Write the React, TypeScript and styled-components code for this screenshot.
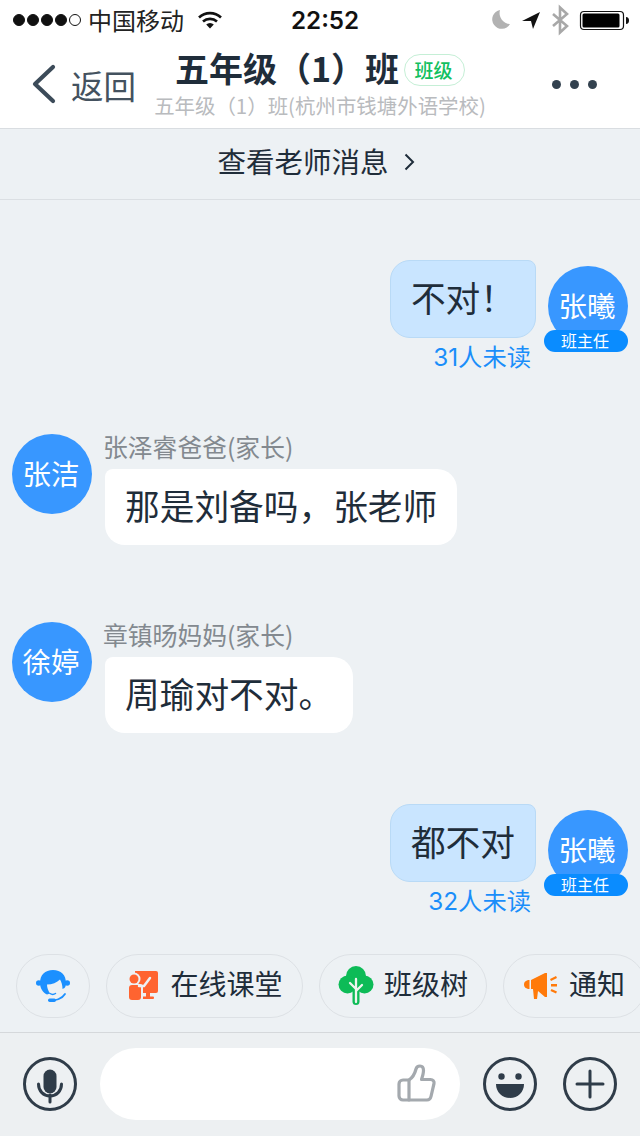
import React from 'react'
import styled, { createGlobalStyle } from 'styled-components'

const GlobalStyle = createGlobalStyle`
    html, body {
        margin: 0;
        padding: 0;
        background: #edf1f4;
    }
    * {
        box-sizing: border-box;
    }
`
const Page = styled.div`
    width: 640px;
    height: 1136px;
    display: flex;
    flex-direction: column;
    overflow: hidden;
    background: #edf1f4;
    color: #1f2d3a;
    font-family: "Noto Sans CJK SC", "Liberation Sans", sans-serif;
`
const StatusBar = styled.div`
    height: 40px;
    flex: none;
    display: flex;
    align-items: center;
    justify-content: space-between;
    padding: 0 11px 0 13px;
    background: #fff;
    position: relative;
    color: #111;
`
const StatusGroup = styled.div`
    display: flex;
    align-items: center;
`
const Dots = styled.div`
    display: flex;
    gap: 2px;
    margin-right: 7px;
`
const Dot = styled.span<{ $hollow?: boolean }>`
    width: 12px;
    height: 12px;
    border-radius: 50%;
    background: ${p => (p.$hollow ? '#fff' : '#111')};
    border: 1.5px solid #111;
`
const Carrier = styled.span`
    font-size: 24px;
    line-height: 40px;
    margin-right: 14px;
    color: #222;
`
const Clock = styled.span`
    position: absolute;
    left: 291px;
    top: 0;
    font: 600 24.2px/41px Inter, "Liberation Sans", sans-serif;
    color: #111;
`
const Nav = styled.div`
    height: 89px;
    flex: none;
    display: grid;
    grid-template-columns: 1fr auto 1fr;
    align-items: center;
    background: #fff;
    border-bottom: 1px solid #d9dde1;
`
const Back = styled.div`
    display: flex;
    align-items: center;
    padding-left: 32px;
    font-size: 32.5px;
    color: #44525f;
    svg {
        margin-right: 15px;
    }
`
const Center = styled.div`
    display: flex;
    flex-direction: column;
    align-items: center;
`
const TitleRow = styled.div`
    display: flex;
    align-items: center;
    height: 36px;
`
const Title = styled.span`
    font-size: 34px;
    font-weight: 700;
    line-height: 36px;
    color: #1f2d3a;
`
const Tag = styled.span`
    width: 61px;
    height: 32px;
    margin: 4px 0 0 5px;
    padding-right: 2px;
    border: 1px solid #c5efd6;
    border-radius: 16px;
    display: flex;
    align-items: center;
    justify-content: center;
    font-size: 19px;
    font-weight: 500;
    color: #12c060;
`
const SubTitle = styled.div`
    font-size: 20.44px;
    line-height: 28px;
    margin-top: 5px;
    color: #b9bbbe;
    white-space: nowrap;
`
const More = styled.div`
    display: flex;
    justify-content: flex-end;
    gap: 9px;
    padding-right: 43px;
`
const MoreDot = styled.span`
    width: 9px;
    height: 9px;
    border-radius: 50%;
    background: #33424f;
`
const NoticeBar = styled.div`
    height: 71px;
    flex: none;
    display: flex;
    align-items: center;
    justify-content: center;
    padding: 0 8px 8px 0;
    font-size: 28.5px;
    color: #1f2d3a;
    border-bottom: 1px solid #dbdfe3;
    svg {
        margin-left: 15px;
        margin-top: 4px;
    }
`
const Chat = styled.div`
    flex: 1;
    display: flex;
    flex-direction: column;
    min-height: 0;
`
const SelfRow = styled.div<{ $top: number }>`
    margin-top: ${p => p.$top}px;
    display: flex;
    justify-content: flex-end;
    padding-right: 12px;
`
const SelfBody = styled.div`
    display: flex;
    flex-direction: column;
    align-items: flex-end;
    margin-right: 12px;
`
const SelfBubble = styled.div`
    height: 78px;
    padding: 0 20px 4px;
    display: flex;
    align-items: center;
    font-size: 34.7px;
    background: #c9e5ff;
    border: 1px solid #b9daf6;
    border-radius: 20px 8px 20px 20px;
`
const Unread = styled.div`
    font-family: Inter, "Noto Sans CJK SC", sans-serif;
    font-size: 24.3px;
    line-height: 36px;
    padding: 1px 5px 1px 0;
    color: #1a8efa;
`
const Avatar = styled.div`
    position: relative;
    width: 80px;
    height: 80px;
    flex: none;
    padding: 0 2px 4px 0;
    border-radius: 50%;
    background: #3897ff;
    color: #fff;
    font-size: 28.4px;
    display: flex;
    align-items: center;
    justify-content: center;
`
const SelfAvatar = styled(Avatar)`
    margin-top: 6px;
`
const RoleBadge = styled.span`
    position: absolute;
    left: -4px;
    right: 0;
    top: 64px;
    height: 22px;
    border-radius: 11px;
    background: #0a8cff;
    font-size: 16px;
    line-height: 21px;
    padding-right: 2px;
    text-align: center;
`
const OtherRow = styled.div<{ $top: number }>`
    margin-top: ${p => p.$top}px;
    display: flex;
    padding-left: 12px;
`
const OtherBody = styled.div`
    margin-left: 12px;
    display: flex;
    flex-direction: column;
    align-items: flex-start;
`
const Sender = styled.div`
    height: 35px;
    margin-left: -1px;
    font-size: 24.8px;
    line-height: 25px;
    color: #83898f;
`
const OtherBubble = styled.div`
    height: 76px;
    margin-left: 1px;
    padding: 0 20px 4px;
    display: flex;
    align-items: center;
    font-size: 34.7px;
    background: #fff;
    border-radius: 8px 20px 20px 20px;
`
const QuickBar = styled.div`
    height: 79px;
    flex: none;
    display: flex;
    gap: 16px;
    padding-left: 16px;
    overflow: hidden;
    border-bottom: 1px solid #d5d8db;
`
const Pill = styled.div<{ $gap?: number; $pad?: number }>`
    height: 64px;
    flex: none;
    display: flex;
    align-items: center;
    gap: ${p => p.$gap ?? 14}px;
    padding: 0 ${p => p.$pad ?? 20}px;
    border: 1px solid #dde1e5;
    border-radius: 32px;
    font-size: 28px;
    color: #1f2d3a;
    white-space: nowrap;
`
const PillText = styled.span`
    margin-top: -6px;
`
const InputBar = styled.div`
    height: 103px;
    flex: none;
    display: flex;
    align-items: center;
    padding: 0 23px 2px;
    background: #edf0f2;
`
const InputBox = styled.div`
    width: 360px;
    height: 72px;
    margin: 0 23px;
    padding-right: 23px;
    border-radius: 36px;
    background: #fff;
    display: flex;
    align-items: center;
    justify-content: flex-end;
`
const RoundIcons = styled.div`
    display: flex;
    gap: 26px;
`

const Wifi = () => (
    <svg width="24" height="18" viewBox="0 0 24 18" fill="none" stroke="#111" strokeWidth="2.6">
        <path d="M1 6.5a16 16 0 0 1 22 0" />
        <path d="M5 10.5a10.5 10.5 0 0 1 14 0" />
        <path d="M12 17.5l-3.8-4a5.5 5.5 0 0 1 7.6 0z" fill="#111" stroke="none" />
    </svg>
)
const StatusRight = () => (
    <svg width="138" height="32" viewBox="0 0 138 32">
        <path d="M9 6a9.5 9.5 0 1 0 10 14A11 11 0 0 1 9 6z" fill="#b2b2b2" />
        <path d="M31 17L49 8l-7 17-2-8z" fill="#111" />
        <path d="M62 10l14 12-7 6.5V3.5l7 6.5-14 12" fill="none" stroke="#a8a8a8" strokeWidth="2.6" />
        <rect x="89.5" y="7.5" width="43" height="18" rx="3.5" fill="#fff" stroke="#111" strokeWidth="1.2" />
        <rect x="91.5" y="9.5" width="37" height="14" rx="1.5" fill="#000" />
        <path d="M135 13c2 0 3 1.5 3 3.5s-1 3.5-3 3.5z" fill="#111" />
    </svg>
)
const BackArrow = () => (
    <svg width="24" height="40" viewBox="0 0 24 40" fill="none" stroke="#3c4b59" strokeWidth="4.2" strokeLinecap="round" strokeLinejoin="round">
        <path d="M21 3L3 20l18 17" />
    </svg>
)
const Chevron = () => (
    <svg width="11" height="18" viewBox="0 0 11 18" fill="none" stroke="#1f2d3a" strokeWidth="2">
        <path d="M1.5 1.5L9 9l-7.5 7.5" />
    </svg>
)
const ServiceIcon = () => (
    <svg width="34" height="34" viewBox="0 0 34 34">
        <circle cx="2.8" cy="14" r="2.8" fill="#1c90ff" />
        <circle cx="31.2" cy="14" r="2.8" fill="#1c90ff" />
        <path d="M4 14C4 6 9 1 17 1s13 5 13 13c0 2-.5 4-1.5 5l-2 1c0-4-1-7-2.5-9.5-3 3-8 5-13 5 0 3 1 6 3 9l-3 1c-4-2-7-6-7-11.500z" fill="#1c90ff" />
        <path d="M14 24.5c1.5 1 4 1 5.5 0" fill="none" stroke="#1c90ff" strokeWidth="1.5" strokeLinecap="round" />
        <path d="M14 31c5 1 12-1 15-6" fill="none" stroke="#1c90ff" strokeWidth="1.8" strokeLinecap="round" />
        <rect x="12" y="29.5" width="8" height="3.5" rx="1.7" fill="#1c90ff" />
    </svg>
)
const ClassroomIcon = () => (
    <svg width="31" height="30" viewBox="-2 0 31 30">
        <path d="M6 0h21a2 2 0 0 1 2 2v18a2 2 0 0 1-2 2H6z" fill="#ff6430" />
        <rect x="17" y="22" width="4" height="4.5" fill="#ff6430" />
        <rect x="13" y="25.5" width="12" height="2.5" rx="1" fill="#ff6430" />
        <circle cx="5" cy="8" r="6.5" fill="#edf1f4" />
        <circle cx="5" cy="8" r="4.5" fill="#ff6430" />
        <rect x="-1" y="13" width="15" height="17" rx="3" fill="#edf1f4" />
        <rect x="0" y="14" width="12" height="15" rx="3" fill="#ff6430" />
        <path d="M10 15h5l6-8" fill="none" stroke="#edf1f4" strokeWidth="2.5" strokeLinecap="round" strokeLinejoin="round" />
    </svg>
)
const TreeIcon = () => (
    <svg width="36" height="40" viewBox="0 0 36 40">
        <circle cx="18" cy="10" r="10" fill="#0dbb57" />
        <circle cx="9.5" cy="18.5" r="9" fill="#0dbb57" />
        <circle cx="26.5" cy="18.5" r="9" fill="#0dbb57" />
        <rect x="14.5" y="16" width="7" height="23" rx="3.5" fill="#0dbb57" />
        <path d="M18 36V13M18 23l-6-6M18 25l6-6" fill="none" stroke="#eef6ef" strokeWidth="2.3" strokeLinecap="round" />
    </svg>
)
const HornIcon = () => (
    <svg width="34" height="28" viewBox="0 0 34 28" fill="#ff7a0a">
        <path d="M5.5 8v9C2.5 17 0 15.5 0 12.5S2.5 8 5.5 8z" />
        <path d="M7 8l14-7h2v24h-2l-7-6-1 8H10L9 17H7z" />
        <path d="M26 7l6-3 1 2-6 3zM27 12h6v2.5h-6zM26.5 19l1-2 5.5 2.5-1 2z" />
    </svg>
)
const ThumbIcon = () => (
    <svg width="40" height="40" viewBox="0 0 40 40" fill="none" stroke="#a4a9ae" strokeWidth="3.2" strokeLinejoin="round" strokeLinecap="round">
        <path d="M12 36H6a4 4 0 0 1-4-4V20a4 4 0 0 1 4-4h6" />
        <path d="M12 36V16c3-2 6-7 7-11 .5-2 2-3 4-3 2.5 0 3.5 2 3.5 4.5 0 3-1 6-2 9h9c2.5 0 4 2 3.5 4l-3 13c-.5 2-2 3.5-4 3.5z" />
    </svg>
)
const MicIcon = () => (
    <svg width="54" height="54" viewBox="0 0 54 54" fill="none" stroke="#2f3c49" strokeWidth="3">
        <circle cx="27" cy="27" r="25.5" />
        <rect x="20.5" y="12.5" width="13" height="24" rx="6.5" fill="#2f3c49" stroke="none" />
        <path d="M15.5 27c0 7 5 12 11.5 12s11.5-5 11.5-12" strokeLinecap="round" />
        <path d="M27 38v7" strokeLinecap="round" />
    </svg>
)
const SmileIcon = () => (
    <svg width="54" height="54" viewBox="0 0 54 54" fill="none" stroke="#2f3c49" strokeWidth="3">
        <circle cx="27" cy="27" r="25.5" />
        <circle cx="18.5" cy="19.5" r="3.2" fill="#2f3c49" stroke="none" />
        <circle cx="35.5" cy="19.5" r="3.2" fill="#2f3c49" stroke="none" />
        <path d="M13 27h28c0 8-6 14-14 14s-14-6-14-14z" fill="#2f3c49" stroke="none" />
    </svg>
)
const PlusIcon = () => (
    <svg width="54" height="54" viewBox="0 0 54 54" fill="none" stroke="#2f3c49" strokeWidth="3">
        <circle cx="27" cy="27" r="25.5" />
        <path d="M14 27h26M27 14v26" strokeLinecap="round" />
    </svg>
)

const App: React.FC = () => {
    return (
        <Page>
            <GlobalStyle />
            <StatusBar>
                <StatusGroup>
                    <Dots>
                        <Dot />
                        <Dot />
                        <Dot />
                        <Dot />
                        <Dot $hollow />
                    </Dots>
                    <Carrier>中国移动</Carrier>
                    <Wifi />
                </StatusGroup>
                <Clock>22:52</Clock>
                <StatusRight />
            </StatusBar>
            <Nav>
                <Back>
                    <BackArrow />
                    返回
                </Back>
                <Center>
                    <TitleRow>
                        <Title>五年级（1）班</Title>
                        <Tag>班级</Tag>
                    </TitleRow>
                    <SubTitle>五年级（1）班(杭州市钱塘外语学校)</SubTitle>
                </Center>
                <More>
                    <MoreDot />
                    <MoreDot />
                    <MoreDot />
                </More>
            </Nav>
            <NoticeBar>
                查看老师消息
                <Chevron />
            </NoticeBar>
            <Chat>
                <SelfRow $top={60}>
                    <SelfBody>
                        <SelfBubble>不对！</SelfBubble>
                        <Unread>31人未读</Unread>
                    </SelfBody>
                    <SelfAvatar>
                        张曦
                        <RoleBadge>班主任</RoleBadge>
                    </SelfAvatar>
                </SelfRow>
                <OtherRow $top={58}>
                    <Avatar>张洁</Avatar>
                    <OtherBody>
                        <Sender>张泽睿爸爸(家长)</Sender>
                        <OtherBubble>那是刘备吗，张老师</OtherBubble>
                    </OtherBody>
                </OtherRow>
                <OtherRow $top={77}>
                    <Avatar>徐婷</Avatar>
                    <OtherBody>
                        <Sender>章镇旸妈妈(家长)</Sender>
                        <OtherBubble>周瑜对不对。</OtherBubble>
                    </OtherBody>
                </OtherRow>
                <SelfRow $top={71}>
                    <SelfBody>
                        <SelfBubble>都不对</SelfBubble>
                        <Unread>32人未读</Unread>
                    </SelfBody>
                    <SelfAvatar>
                        张曦
                        <RoleBadge>班主任</RoleBadge>
                    </SelfAvatar>
                </SelfRow>
            </Chat>
            <QuickBar>
                <Pill $pad={19}><ServiceIcon /></Pill>
                <Pill $gap={13} $pad={19.5}><ClassroomIcon /><PillText>在线课堂</PillText></Pill>
                <Pill $gap={10} $pad={18}><TreeIcon /><PillText>班级树</PillText></Pill>
                <Pill $gap={11} $pad={20}><HornIcon /><PillText>通知</PillText></Pill>
            </QuickBar>
            <InputBar>
                <MicIcon />
                <InputBox>
                    <ThumbIcon />
                </InputBox>
                <RoundIcons>
                    <SmileIcon />
                    <PlusIcon />
                </RoundIcons>
            </InputBar>
        </Page>
    )
}
export default App
